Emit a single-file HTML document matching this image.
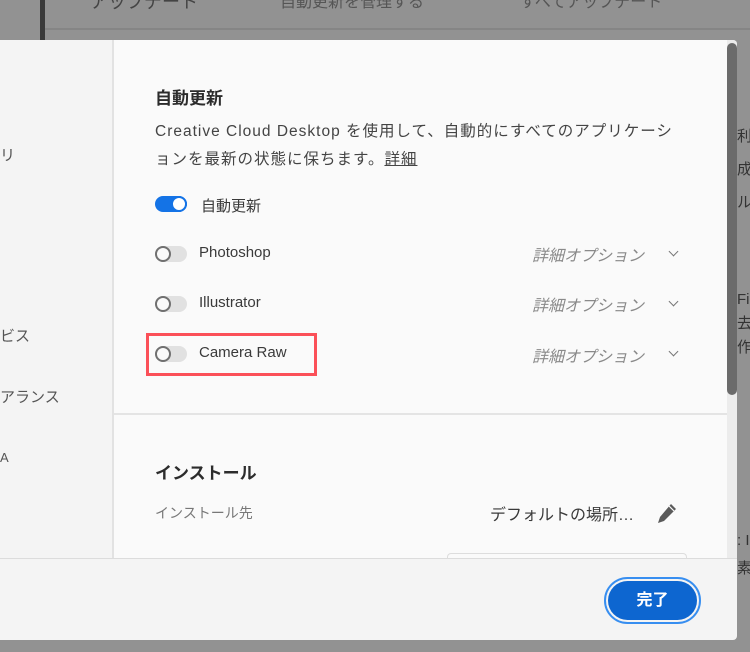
<!DOCTYPE html>
<html><head><meta charset="utf-8"><style>
*{margin:0;padding:0;box-sizing:border-box}
body{width:750px;height:652px;overflow:hidden;background:#929292;font-family:"Liberation Sans","Noto Sans CJK JP",sans-serif;position:relative;color:#2c2c2c}
.a{position:absolute}
.tog{position:absolute;width:32px;height:16px;border-radius:8px;background:#e1e1e1}
.tog i{position:absolute;left:0;top:0;width:16px;height:16px;border-radius:50%;background:#fafafa;border:2px solid #707070}
.opt{position:absolute;left:532px;font-size:16px;font-style:italic;color:#8a8a8a}
.chev{position:absolute;left:670px;width:7px;height:7px;border-right:1.5px solid #777;border-bottom:1.5px solid #777;transform:rotate(45deg)}
.lbl{position:absolute;left:199px;font-size:15px;color:#3a3a3a}
</style></head><body>
<div class="a" style="left:40px;top:0;width:5px;height:40px;background:#3a3a3a"></div>
<div class="a" style="left:45px;top:28px;width:705px;height:2px;background:#858585"></div>
<div class="a" style="left:90px;top:-12px;font-size:18px;color:#444">アップデート</div>
<div class="a" style="left:280px;top:-12px;font-size:16px;color:#555">自動更新を管理する</div>
<div class="a" style="left:520px;top:-12px;font-size:16px;color:#555">すべてアップデート</div>
<div class="a" style="left:737px;top:120px;font-size:15px;color:#333;line-height:33px">利<br>成<br>ル</div>
<div class="a" style="left:737px;top:288px;font-size:15px;color:#333;line-height:24px">Fi<br>去<br>作</div>
<div class="a" style="left:737px;top:527px;font-size:15px;color:#333;line-height:28px">: I<br>素</div>
<div class="a" style="left:0;top:40px;width:737px;height:600px;background:#f4f4f4;border-radius:0 4px 4px 0;overflow:hidden">
 <div class="a" style="left:0;top:104px;font-size:15px;color:#555">リ</div>
 <div class="a" style="left:0;top:285px;font-size:15px;color:#555">ビス</div>
 <div class="a" style="left:0;top:346px;font-size:15px;color:#555">アランス</div>
 <div class="a" style="left:0;top:410px;font-size:13px;color:#555">A</div>
 <div class="a" style="left:112px;top:0;width:2px;height:518px;background:#e2e2e2"></div>
 <div class="a" style="left:114px;top:0;width:613px;height:518px;background:#fafafa"></div>
 <div class="a" style="left:727px;top:0;width:10px;height:518px;background:#ececec"></div>
 <div class="a" style="left:727px;top:3px;width:10px;height:352px;background:#6b6b6b;border-radius:5px"></div>
 <div class="a" style="left:114px;top:373px;width:613px;height:2px;background:#e4e4e4"></div>
 <div class="a" style="left:0;top:518px;width:737px;height:1px;background:#dcdcdc"></div>
 <div class="a" style="left:447px;top:513px;width:240px;height:6px;border:1px solid #ddd;border-bottom:none;border-radius:4px 4px 0 0"></div>
</div>
<div class="a" style="left:155px;top:84px;font-size:17px;font-weight:bold;color:#2c2c2c">自動更新</div>
<div class="a" style="left:155px;top:118px;width:600px;font-size:15.5px;line-height:28px;color:#444;letter-spacing:1px;white-space:nowrap">Creative Cloud Desktop を使用して、自動的にすべてのアプリケーシ<br>ョンを最新の状態に保ちます。<span style="text-decoration:underline">詳細</span></div>
<div class="tog" style="left:155px;top:196px;background:#1473e6"><i style="left:16px;border-color:#1473e6;background:#fff"></i></div>
<div class="lbl" style="left:201px;top:195px">自動更新</div>
<div class="tog" style="left:155px;top:246px"><i></i></div>
<div class="lbl" style="top:244px">Photoshop</div>
<div class="opt" style="top:242px">詳細オプション</div><div class="chev" style="top:248px"></div>
<div class="tog" style="left:155px;top:296px"><i></i></div>
<div class="lbl" style="top:294px">Illustrator</div>
<div class="opt" style="top:292px">詳細オプション</div><div class="chev" style="top:298px"></div>
<div class="tog" style="left:155px;top:346px"><i></i></div>
<div class="lbl" style="top:344px">Camera Raw</div>
<div class="opt" style="top:343px">詳細オプション</div><div class="chev" style="top:348px"></div>
<div class="a" style="left:146px;top:333px;width:171px;height:43px;border:3px solid #fb5058"></div>
<div class="a" style="left:155px;top:459px;font-size:17px;font-weight:bold">インストール</div>
<div class="a" style="left:155px;top:503px;font-size:14px;color:#777">インストール先</div>
<div class="a" style="left:490px;top:501px;font-size:16px;color:#3a3a3a">デフォルトの場所…</div>
<svg class="a" style="left:656px;top:502px" width="22" height="22" viewBox="0 0 22 22"><path d="M15 2l5 5L8 19l-6 2 2-6z" fill="#5a5a5a"/><path d="M13 4l5 5" stroke="#fafafa" stroke-width="1.2"/></svg>
<div class="a" style="left:604px;top:577px;width:97px;height:47px;border:2px solid #378ef0;border-radius:24px;padding:2px"><div style="width:100%;height:100%;background:#0d66d0;border-radius:20px;color:#fff;font-weight:bold;font-size:16px;text-align:center;line-height:39px">完了</div></div>
</body></html>
